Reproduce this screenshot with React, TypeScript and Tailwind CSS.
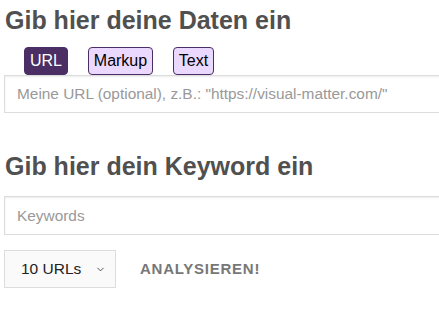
import { ChevronDown } from 'lucide-react';

const tabs = [
  { label: 'URL', w: 'w-[44px]' },
  { label: 'Markup', w: 'w-[65px]' },
  { label: 'Text', w: 'w-[41px]' },
];

export default function App() {
  return (
    <div className="w-[439px] h-[325px] bg-white overflow-hidden font-['Liberation_Sans',Arial,sans-serif]">
      <h2 className="pl-[5px] pt-[6px] text-[25px] leading-[29px] font-bold text-[#505050]">
        Gib hier deine Daten ein
      </h2>
      <div className="flex gap-[20px] pl-[24px] mt-[12px]">
        {tabs.map((t, i) => (
          <button
            key={t.label}
            className={
              i === 0
                ? `${t.w} h-[28px] rounded-[4px] border border-[#4b2e63] bg-[#4b2e63] text-white text-[16px]`
                : `${t.w} h-[28px] rounded-[4px] border border-[#4b2e63] bg-[#ead8ff] text-black text-[16px]`
            }
          >
            {t.label}
          </button>
        ))}
      </div>
      <div className="ml-[4px] w-[460px] h-[38px] border border-[#ddd] shadow-[inset_0_1px_2px_rgba(0,0,0,0.08)] flex items-center pl-[12px] text-[15.4px] text-[#999]">
        Meine URL (optional), z.B.: "https://visual-matter.com/"
      </div>

      <h2 className="pl-[5px] mt-[39px] text-[25px] leading-[29px] font-bold text-[#505050]">
        Gib hier dein Keyword ein
      </h2>
      <div className="ml-[4px] mt-[15px] w-[460px] h-[39px] border border-[#ddd] shadow-[inset_0_1px_2px_rgba(0,0,0,0.08)] flex items-center pl-[12px] text-[15.4px] text-[#999]">
        Keywords
      </div>
      <div className="flex items-center mt-[15px] ml-[4px]">
        <div className="w-[112px] h-[38px] border border-[#ddd] bg-[#fafafa] flex items-center pl-[16px] text-[15.5px] text-[#222]">
          10 URLs
          <ChevronDown size={11} strokeWidth={2} className="ml-[14px] text-[#444]" />
        </div>
        <span className="ml-[24px] text-[15px] font-bold tracking-[0.75px] text-[#777]">ANALYSIEREN!</span>
      </div>
    </div>
  );
}
